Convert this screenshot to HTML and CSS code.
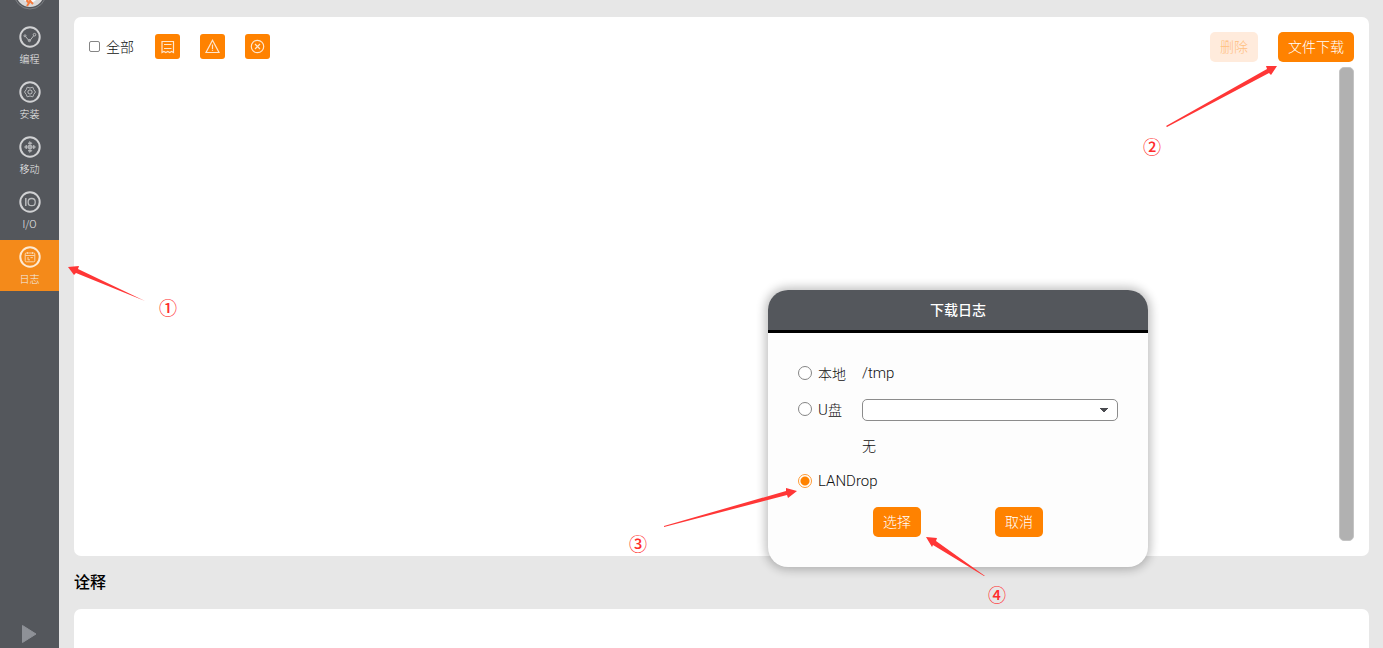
FILE: index.html
```
<!DOCTYPE html>
<html lang="zh-CN">
<head>
    <meta charset="UTF-8">
    <meta name="viewport" content="width=device-width, initial-scale=1.0">
    <title>日志</title>
    <link rel="stylesheet" href="styles.css">
</head>
<body>
    <div class="layout">
        <nav class="sidebar">
            <svg class="avatar" viewBox="0 0 34 34">
                <circle cx="17" cy="17" r="16" fill="none" stroke="#7c7f83" stroke-width="1"/>
                <circle cx="17" cy="17" r="14" fill="#d8d8d8"/>
                <path d="M9 22 Q17 32 25 22 L23 18 H11 Z" fill="#fafafa"/>
                <path d="M17 21 L14 25 L16 27 L14 30 M18 22 L17 25 L20 28" fill="none" stroke="#f47a3c" stroke-width="2"/>
            </svg>

            <a href="#" class="nav-item">
                <svg viewBox="0 0 22 22">
                    <circle cx="11" cy="11" r="9.7" class="ring"/>
                    <path d="M6.6 10.6 L9.6 14.2 H11.2 L14.8 9.6"/>
                    <circle cx="6" cy="9.8" r="1"/><circle cx="10.4" cy="14.6" r="1.1"/><circle cx="15.5" cy="8.7" r="1.3"/>
                </svg>
                <span>编程</span>
            </a>
            <a href="#" class="nav-item">
                <svg viewBox="0 0 22 22">
                    <circle cx="11" cy="11" r="9.7" class="ring"/>
                    <path d="M8.2 6.2 L11 7 L13.8 6.2 L14.7 8.5 L16.5 11 L14.7 13.5 L13.8 15.8 L11 15 L8.2 15.8 L7.3 13.5 L5.5 11 L7.3 8.5 Z"/>
                    <path d="M11 8.8 L13 9.9 V12.1 L11 13.2 L9 12.1 V9.9 Z"/>
                </svg>
                <span>安装</span>
            </a>
            <a href="#" class="nav-item">
                <svg viewBox="0 0 22 22">
                    <circle cx="11" cy="11" r="9.7" class="ring"/>
                    <path d="M11 6 V16 M6 11 H16 M9.2 7.4 L11 5.6 L12.8 7.4 Z M9.2 14.6 L11 16.4 L12.8 14.6 Z M7.4 9.2 L5.6 11 L7.4 12.8 Z M14.6 9.2 L16.4 11 L14.6 12.8 Z"/>
                    <path d="M9.3 9.3 H12.7 V12.7 H9.3 Z"/>
                </svg>
                <span>移动</span>
            </a>
            <a href="#" class="nav-item">
                <svg viewBox="0 0 22 22">
                    <circle cx="11" cy="11" r="9.7" class="ring"/>
                    <path d="M6.8 7 V15" stroke-width="1.5"/>
                    <rect x="9.2" y="7.5" width="7" height="7.2" rx="3.2" stroke-width="1.3"/>
                </svg>
                <span>I/O</span>
            </a>
            <a href="#" class="nav-item active">
                <svg viewBox="0 0 22 22">
                    <circle cx="11" cy="11" r="9.7" class="ring"/>
                    <rect x="6.2" y="7" width="9.6" height="8.8" rx="1"/>
                    <path d="M6.2 9.5 H15.8 M8.5 6 V8 M13.5 6 V8 M9 11 V13.8 H11 M11.5 11.6 H13.8"/>
                </svg>
                <span>日志</span>
            </a>

            <button type="button" class="play" aria-label="运行">
                <svg viewBox="0 0 17 20"><path d="M1.5 1.5 L15 10 L1.5 18.5 Z"/></svg>
            </button>
        </nav>

        <main class="main">
            <section class="panel log-panel">
                <div class="toolbar">
                    <label class="check-all"><input type="checkbox"> 全部</label>
                    <button type="button" class="filter" aria-label="信息">
                        <svg viewBox="0 0 25 25"><path d="M7 18.5 V7.5 H18.5 V18.5 L16.6 17.5 L14.7 18.5 L12.8 17.5 L10.8 18.5 L8.9 17.5 Z M9 10.5 H16.5 M9 14.5 H16.5"/></svg>
                    </button>
                    <button type="button" class="filter" aria-label="警告">
                        <svg viewBox="0 0 25 25"><path d="M12.5 6.3 L19 18.5 H6 Z M12.5 10.5 V15 M12.5 15.8 V16.8"/></svg>
                    </button>
                    <button type="button" class="filter" aria-label="错误">
                        <svg viewBox="0 0 25 25"><circle cx="12.5" cy="12.5" r="6.2"/><path d="M10 10 L15 15 M15 10 L10 15"/></svg>
                    </button>
                    <div class="actions">
                        <button type="button" class="btn" disabled>删除</button>
                        <button type="button" class="btn">文件下载</button>
                    </div>
                </div>
                <div class="log-list">
                    <div class="scrollbar"></div>
                </div>
            </section>

            <h2 class="notes-title">诠释</h2>
            <section class="panel notes-panel"></section>
        </main>
    </div>

    <!-- Download dialog -->
    <form class="dialog">
        <h3>下载日志</h3>
        <div class="dialog-body">
            <div class="row">
                <input type="radio" name="target" id="local">
                <label for="local">本地</label>
                <span class="latin">/tmp</span>
            </div>
            <div class="row">
                <input type="radio" name="target" id="usb">
                <label for="usb"><span class="latin">U</span>盘</label>
                <select aria-label="U盘"></select>
            </div>
            <div class="row">
                <span class="hint">无</span>
            </div>
            <div class="row">
                <input type="radio" name="target" id="landrop" checked>
                <label for="landrop" class="latin">LANDrop</label>
            </div>
            <div class="dialog-actions">
                <button type="button" class="btn">选择</button>
                <button type="button" class="btn">取消</button>
            </div>
        </div>
    </form>

    <!-- Step markers -->
    <div class="step step-1">
        <svg width="78" height="36"><path d="M0 1 L11 0 L10 3 L77 35 L8 7 L6 9 Z"/></svg>
        <span>①</span>
    </div>
    <div class="step step-2">
        <svg width="112" height="62"><path d="M111 0 L100 0 L101 3 L0 60 L1 61 L103 7 L105 9 Z"/></svg>
        <span>②</span>
    </div>
    <div class="step step-3">
        <svg width="134" height="40"><path d="M133 3 L122 0 L122 3 L0 38 L0 39 L123 7 L124 10 Z"/></svg>
        <span>③</span>
    </div>
    <div class="step step-4">
        <svg width="60" height="40"><path d="M0 0 L11 1 L10 4 L59 39 L58 39 L7 8 L6 10 Z"/></svg>
        <span>④</span>
    </div>
</body>
</html>
```
FILE: styles.css
```
* {
    box-sizing: border-box;
    margin: 0;
    padding: 0;
}

body {
    position: relative;
    background: #e7e7e7;
    color: #111;
    font-family: "Noto Sans CJK SC", sans-serif;
    font-size: 14px;
    font-weight: 300;
    overflow: hidden;
}

button,
select {
    font: inherit;
}

.layout {
    display: flex;
    height: 100vh;
}

/* Sidebar */
.sidebar {
    display: flex;
    flex-direction: column;
    align-items: center;
    gap: 4px;
    width: 59px;
    padding-bottom: 4px;
    background: #54575c;
}

.avatar {
    flex: none;
    width: 34px;
    height: 34px;
    margin-top: -24px;
    margin-bottom: 6px;
}

.nav-item {
    display: flex;
    flex-direction: column;
    align-items: center;
    gap: 1px;
    width: 100%;
    height: 51px;
    padding-top: 6px;
    color: #f0f0f0;
    font-size: 10px;
    line-height: 20px;
    text-decoration: none;
}

.nav-item svg {
    width: 22px;
    height: 22px;
    fill: none;
    stroke: #b9bbbd;
    stroke-width: 1;
}

.nav-item .ring {
    stroke: #d0d1d3;
    stroke-width: 2;
}

.nav-item.active {
    background: #f48a1a;
}

.nav-item.active svg {
    stroke: #fbd3a6;
}

.nav-item.active .ring {
    stroke: #fde9d2;
}

.play {
    width: 17px;
    height: 20px;
    margin-top: auto;
    border: none;
    background: none;
}

.play svg {
    display: block;
    fill: #8e9197;
    stroke: #8e9197;
    stroke-width: 1;
    stroke-linejoin: round;
}

/* Main area */
.main {
    flex: 1;
    display: flex;
    flex-direction: column;
    padding: 17px 14px 0 15px;
}

.panel {
    background: #fff;
    border-radius: 7px;
}

.log-panel {
    flex: 1;
    display: flex;
    flex-direction: column;
    padding: 15px;
}

.toolbar {
    display: flex;
    align-items: center;
    gap: 20px;
}

.check-all {
    display: flex;
    align-items: center;
    gap: 6px;
    margin-right: 1px;
    padding-bottom: 2px;
}

.check-all input {
    appearance: none;
    width: 11px;
    height: 11px;
    border: 1px solid #858585;
    border-radius: 2px;
}

.filter {
    width: 25px;
    height: 25px;
    margin-bottom: 1px;
    border: none;
    border-radius: 3px;
    background: #ff8200;
}

.filter svg {
    display: block;
    fill: none;
    stroke: #ffe6cc;
    stroke-width: 1.2;
}

.actions {
    display: flex;
    gap: 20px;
    margin-left: auto;
}

.btn {
    height: 30px;
    padding: 0 10px 2px;
    border: none;
    border-radius: 5px;
    background: #ff8200;
    color: #fff;
    cursor: pointer;
}

.btn:disabled {
    background: #ffebdc;
    color: #ffc080;
}

.log-list {
    flex: 1;
    display: flex;
    justify-content: flex-end;
    padding-top: 5px;
}

.scrollbar {
    width: 15px;
    border: 1px solid #c4c4c4;
    border-radius: 5px;
    background: #b1b1b1;
}

.notes-title {
    padding-bottom: 2px;
    color: #000;
    font-size: 16px;
    font-weight: 500;
    line-height: 51px;
}

.notes-panel {
    height: 39px;
    border-radius: 7px 7px 0 0;
}

/* Download dialog */
.dialog {
    position: absolute;
    top: 290px;
    right: 235px;
    width: 380px;
    border-radius: 20px;
    background: #fdfdfd;
    box-shadow: 0 0 10px 3px rgba(0, 0, 0, 0.24);
}

.dialog h3 {
    padding-bottom: 2px;
    border-bottom: 3px solid #000;
    border-radius: 20px 20px 0 0;
    background: #54575c;
    color: #fff;
    font-size: 14px;
    font-weight: 500;
    line-height: 38px;
    text-align: center;
}

.dialog-body {
    padding: 22px 30px 30px;
}

.row {
    display: flex;
    align-items: center;
    height: 36px;
}

.row input {
    appearance: none;
    width: 14px;
    height: 14px;
    margin-right: 6px;
    border: 1px solid #858585;
    border-radius: 50%;
    background: #fff;
}

.row input:checked {
    border-color: #ff9a33;
    background: radial-gradient(circle, #ff8200 4px, #fff 5px);
}

.row label {
    min-width: 44px;
}

.latin {
    font-family: Roboto, "Noto Sans CJK SC", sans-serif;
    font-size: 15px;
}

.row select {
    flex: 1;
    appearance: none;
    height: 22px;
    margin-top: 2px;
    border: 1px solid #8c8c8c;
    border-radius: 5px;
    background: linear-gradient(to bottom left, #4a4b50 50%, transparent 50%) right 13px top 8px / 4px 5px no-repeat,
        linear-gradient(to bottom right, #4a4b50 50%, transparent 50%) right 9px top 8px / 4px 5px no-repeat,
        #fff;
}

.hint {
    margin-left: 64px;
}

.dialog-actions {
    display: flex;
    justify-content: center;
    gap: 74px;
    margin-top: 8px;
}

/* Step markers */
.step {
    position: absolute;
    color: #ff2d2d;
    font-size: 18px;
    font-weight: 500;
    line-height: 18px;
}

.step svg {
    display: block;
    fill: #ff3636;
}

.step span {
    display: block;
    width: 18px;
}

.step-1 {
    top: 266px;
    left: 68px;
}

.step-1 span {
    margin: -4px 0 0 91px;
}

.step-2 {
    top: 66px;
    right: 105px;
}

.step-2 span {
    margin: 9px 0 0 -23px;
}

.step-3 {
    top: 488px;
    right: 585px;
}

.step-3 span {
    margin: 6px 0 0 -35px;
}

.step-4 {
    top: 537px;
    right: 377px;
}

.step-4 span {
    margin: 8px 0 0 62px;
}
```
